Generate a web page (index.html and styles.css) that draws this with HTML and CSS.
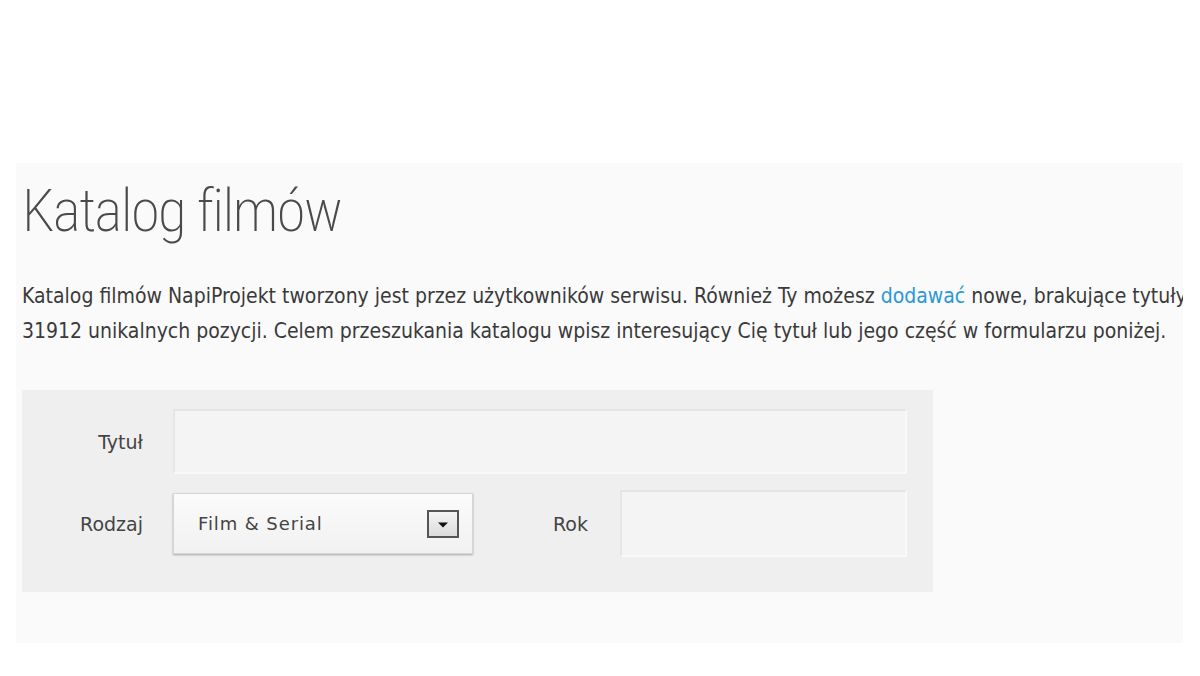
FILE: index.html
```html
<!DOCTYPE html>
<html lang="pl">
<head>
<meta charset="utf-8">
<title>Katalog filmów</title>
<link rel="stylesheet" href="styles.css">
</head>
<body>
<div class="page">
  <h1 class="title">Katalog filmów</h1>
  <p class="intro">Katalog filmów NapiProjekt tworzony jest przez użytkowników serwisu. Również Ty możesz <a href="#" class="link">dodawać</a> nowe, brakujące tytuły.<br>31912 unikalnych pozycji. Celem przeszukania katalogu wpisz interesujący Cię tytuł lub jego część w formularzu poniżej.</p>
  <form class="search">
    <div class="row">
      <label class="label">Tytuł</label>
      <input class="field field-wide" type="text">
    </div>
    <div class="row">
      <label class="label">Rodzaj</label>
      <div class="select">
        <span class="select-text">Film &amp; Serial</span>
        <span class="select-btn"><svg width="14" height="8" viewBox="0 0 14 8"><path d="M2 1.5h10L7 6.5z" fill="#111"/></svg></span>
      </div>
      <label class="label label-rok">Rok</label>
      <input class="field field-rok" type="text">
    </div>
  </form>
</div>
</body>
</html>
```
FILE: styles.css
```css
html, body {
  margin: 0;
  padding: 0;
  background: #ffffff;
}
.page {
  margin: 163px 0 0 16px;
  width: 1161px;
  height: 480px;
  padding: 0 0 0 6px;
  background: #fafafa;
  overflow: hidden;
}
.title {
  margin: 0;
  padding-top: 12px;
  font-family: "Roboto Condensed", "Roboto", sans-serif;
  font-weight: 200;
  font-size: 59px;
  line-height: 72px;
  color: #4a4a4a;
  letter-spacing: -1.6px;
}
.intro {
  margin: 32px 0 0 0;
  font-family: "DejaVu Sans Condensed", "DejaVu Sans", sans-serif;
  font-stretch: condensed;
  font-size: 21px;
  line-height: 35px;
  color: #3a3a3a;
  white-space: nowrap;
}
.link {
  color: #2b98d6;
  text-decoration: none;
}
.search {
  margin-top: 41px;
  width: 911px;
  height: 202px;
  background: #efefef;
  box-sizing: border-box;
  padding: 19px 26px 0 0;
  display: flex;
  flex-direction: column;
  gap: 16px;
}
.row {
  display: flex;
  align-items: center;
}
.label {
  width: 121px;
  text-align: right;
  font-family: "DejaVu Sans", sans-serif;
  font-size: 19px;
  color: #444;
  margin-right: 30px;
}
.field {
  box-sizing: border-box;
  height: 65px;
  background: #f4f4f4;
  border: 2px solid #f9f9f9;
  border-top-color: #e4e4e4;
  border-left-color: #e6e6e6;
  outline: none;
}
.field-wide {
  flex: 1;
}
.select {
  box-sizing: border-box;
  width: 300px;
  height: 61px;
  background: linear-gradient(#fbfbfb, #f1f1f1);
  border: 1px solid #d6d6d6;
  box-shadow: 0 1px 2px rgba(0,0,0,0.3);
  display: flex;
  align-items: center;
  justify-content: space-between;
  padding: 0 13px 0 24px;
}
.select-text {
  font-family: "DejaVu Sans", sans-serif;
  font-size: 18px;
  letter-spacing: 0.9px;
  color: #444;
}
.select-btn {
  box-sizing: border-box;
  width: 32px;
  height: 28px;
  border: 2px solid #555;
  background: linear-gradient(#f4f4f4, #dcdcdc);
  display: flex;
  align-items: center;
  justify-content: center;
  padding-top: 3px;
}
.label-rok {
  width: 115px;
  margin-right: 32px;
}
.field-rok {
  flex: 1;
  height: 67px;
}
```
